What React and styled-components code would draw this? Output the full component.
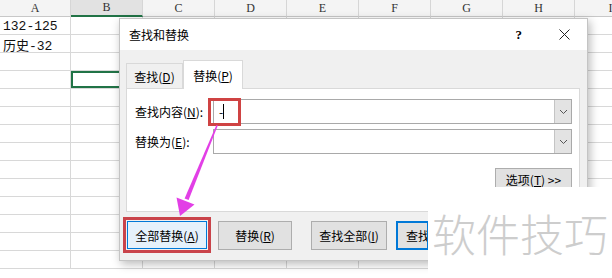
import React from "react";
import styled, { createGlobalStyle } from "styled-components";

const GlobalStyle = createGlobalStyle`
  html, body {
    margin: 0;
    padding: 0;
    background: #fff;
  }
  body {
    width: 612px;
    height: 278px;
    overflow: hidden;
    font-family: "Noto Sans CJK SC", "Noto Sans", sans-serif;
  }
`;

const Screen = styled.div`
  position: relative;
  width: 612px;
  height: 278px;
  overflow: hidden;
  background: #fff;
`;

/* ---------- spreadsheet behind the dialog ---------- */

const Sheet = styled.div`
  display: grid;
  grid-template-columns: 71px repeat(8, 72px);
  grid-template-rows: 17px;
  grid-auto-rows: 18px;
`;

const HeadCell = styled.div`
  box-sizing: border-box;
  display: flex;
  align-items: center;
  justify-content: center;
  background: ${(p) => (p.$active ? "#e2e2e2" : "#f4f4f4")};
  border-right: 1px solid #d6d6d6;
  border-bottom: ${(p) => (p.$active ? "2px solid #217346" : "1px solid #c8c8c8")};
  font-family: "Liberation Serif", "DejaVu Serif", serif;
  font-size: 12px;
  color: #333;
`;

const Cell = styled.div`
  box-sizing: border-box;
  display: flex;
  align-items: center;
  padding: 2px 0 0 3px;
  border-right: 1px solid #d8d8d8;
  border-bottom: 1px solid #d8d8d8;
  box-shadow: ${(p) => (p.$selected ? "inset 0 0 0 2px #217346" : "none")};
  font-family: "Liberation Mono", "Noto Sans CJK SC", monospace;
  font-size: 13px;
  color: #111;
  white-space: nowrap;
`;

/* ---------- find & replace dialog ---------- */

const Dialog = styled.div`
  position: absolute;
  left: 119px;
  top: 18px;
  width: 469px;
  height: 243px;
  box-sizing: border-box;
  display: flex;
  flex-direction: column;
  border: 1px solid #c4c4c4;
  box-shadow: 2px 3px 9px rgba(0, 0, 0, 0.28);
  font-size: 12px;
  color: #000;
`;

const TitleBar = styled.div`
  height: 31px;
  display: flex;
  align-items: center;
  padding: 0 17px 0 9px;
  background: #fff;
`;

const Title = styled.div`
  flex: 1;
  font-size: 12px;
`;

const Help = styled.span`
  font-family: "Liberation Serif", serif;
  font-size: 13px;
  font-weight: bold;
  margin-right: 37px;
`;

const Body = styled.div`
  flex: 1;
  display: flex;
  flex-direction: column;
  background: #f0f0f0;
  padding: 10px 0 0 2px;
`;

const TabRow = styled.div`
  display: flex;
  align-items: flex-end;
  height: 28px;
  margin-left: 4px;
`;

const Tab = styled.div`
  position: relative;
  z-index: 1;
  box-sizing: border-box;
  display: flex;
  align-items: center;
  justify-content: center;
  width: ${(p) => (p.$active ? "60px" : "57px")};
  height: ${(p) => (p.$active ? "29px" : "25px")};
  margin-bottom: ${(p) => (p.$active ? "-1px" : "0")};
  padding-top: ${(p) => (p.$active ? "0" : "1px")};
  background: ${(p) => (p.$active ? "#fff" : "#f0f0f0")};
  border: 1px solid #d9d9d9;
  border-bottom: none;
`;

const Panel = styled.div`
  box-sizing: border-box;
  width: 454px;
  height: 124px;
  margin-left: 4px;
  padding: 10px 7px 0 8px;
  background: #fff;
  border: 1px solid #d9d9d9;
  display: flex;
  flex-direction: column;
  gap: 5px;
`;

const FieldRow = styled.div`
  display: flex;
  align-items: center;
  height: 25px;
`;

const Label = styled.div`
  width: 78px;
`;

const Combo = styled.div`
  position: relative;
  box-sizing: border-box;
  flex: 1;
  height: 25px;
  display: flex;
  border: 1px solid #a9a9a9;
  background: #fff;
`;

const ComboText = styled.div`
  flex: 1;
  display: flex;
  align-items: center;
  padding-left: 5px;
  font-size: 12px;
`;

const Caret = styled.span`
  display: inline-block;
  width: 1px;
  height: 15px;
  background: #000;
`;

const DropButton = styled.div`
  width: 16px;
  display: flex;
  align-items: center;
  justify-content: center;
  background: #e3e3e3;
  border-left: 1px solid #c4c4c4;
`;

const Highlight = styled.div`
  position: absolute;
  left: -6px;
  top: -2px;
  width: 33px;
  height: 28px;
  box-sizing: border-box;
  border: 3px solid #cf4343;
`;

const OptionsRow = styled.div`
  display: flex;
  justify-content: flex-end;
  margin-top: 9px;
`;

const Button = styled.div`
  box-sizing: border-box;
  display: flex;
  align-items: center;
  justify-content: ${(p) => (p.$start ? "flex-start" : "center")};
  padding-left: ${(p) => (p.$start ? "8px" : "0")};
  width: ${(p) => p.$w}px;
  height: ${(p) => p.$h || 29}px;
  margin-left: ${(p) => p.$gap || 0}px;
  background: ${(p) => (p.$primary ? "#e5f1fb" : "#e1e1e1")};
  border: ${(p) => (p.$default ? "2px solid #0078d7" : p.$primary ? "1px solid #0078d7" : "1px solid #adadad")};
  white-space: nowrap;
  overflow: hidden;
  font-size: 12px;
`;

const ButtonRow = styled.div`
  display: flex;
  align-items: center;
  margin-top: 5px;
  padding-left: 1px;
`;

const RedFrame = styled.div`
  box-sizing: border-box;
  width: 88px;
  height: 36px;
  padding: 1px;
  border: 3px solid #c9434a;
  display: flex;
`;

/* ---------- overlays ---------- */

const Arrow = styled.svg`
  position: absolute;
  left: 0;
  top: 0;
  pointer-events: none;
`;

const Watermark = styled.div`
  position: absolute;
  left: 428px;
  top: 187px;
  width: 184px;
  height: 91px;
  background: #fff;
  display: flex;
  align-items: center;
  justify-content: center;
  box-sizing: border-box;
  font-size: 44px;
  font-weight: 300;
  color: #cdcdcd;
`;

const columns = ["A", "B", "C", "D", "E", "F", "G", "H", "I"];
const cellText = { "0-0": "132-125", "1-0": "历史-32" };

function Chevron() {
  return (
    <svg width="9" height="6" viewBox="0 0 9 6">
      <path d="M1 1 L4.5 4.5 L8 1" fill="none" stroke="#555" strokeWidth="1" />
    </svg>
  );
}

function CloseIcon() {
  return (
    <svg width="11" height="11" viewBox="0 0 11 11">
      <path d="M0.5 0.5 L10.5 10.5 M10.5 0.5 L0.5 10.5" stroke="#222" strokeWidth="1" />
    </svg>
  );
}

export default function App() {
  const rows = Array.from({ length: 14 }, (_, r) => r);

  return (
    <Screen>
      <GlobalStyle />
      <Sheet>
        {columns.map((c) => (
          <HeadCell key={c} $active={c === "B"}>
            {c}
          </HeadCell>
        ))}
        {rows.map((r) =>
          columns.map((c, ci) => (
            <Cell key={r + c} $selected={r === 3 && ci === 1}>
              {cellText[`${r}-${ci}`]}
            </Cell>
          ))
        )}
      </Sheet>

      <Dialog>
        <TitleBar>
          <Title>查找和替换</Title>
          <Help>?</Help>
          <CloseIcon />
        </TitleBar>
        <Body>
          <TabRow>
            <Tab>
              查找(<u>D</u>)
            </Tab>
            <Tab $active>
              替换(<u>P</u>)
            </Tab>
          </TabRow>
          <Panel>
            <FieldRow>
              <Label>
                查找内容(<u>N</u>):
              </Label>
              <Combo>
                <ComboText>
                  -<Caret />
                </ComboText>
                <DropButton>
                  <Chevron />
                </DropButton>
                <Highlight />
              </Combo>
            </FieldRow>
            <FieldRow>
              <Label>
                替换为(<u>E</u>):
              </Label>
              <Combo>
                <ComboText />
                <DropButton>
                  <Chevron />
                </DropButton>
              </Combo>
            </FieldRow>
            <OptionsRow>
              <Button $w={77} $h={23}>
                选项(<u>T</u>) &gt;&gt;
              </Button>
            </OptionsRow>
          </Panel>
          <ButtonRow>
            <RedFrame>
              <Button $w={80} $h={28} $primary>
                全部替换(<u>A</u>)
              </Button>
            </RedFrame>
            <Button $w={74} $gap={7}>
              替换(<u>R</u>)
            </Button>
            <Button $w={76} $gap={19}>
              查找全部(<u>I</u>)
            </Button>
            <Button $w={33} $gap={9} $default $start>
              查找下一个(<u>F</u>)
            </Button>
          </ButtonRow>
        </Body>
      </Dialog>

      <Arrow width="612" height="278" viewBox="0 0 612 278">
        <polygon points="216.4,125 217.8,125.6 188.6,200 184.6,198.4" fill="#e23fe6" />
        <polygon points="180,216 176.5,197.5 194.5,204.5" fill="#e23fe6" />
      </Arrow>

      <Watermark>软件技巧</Watermark>
    </Screen>
  );
}
